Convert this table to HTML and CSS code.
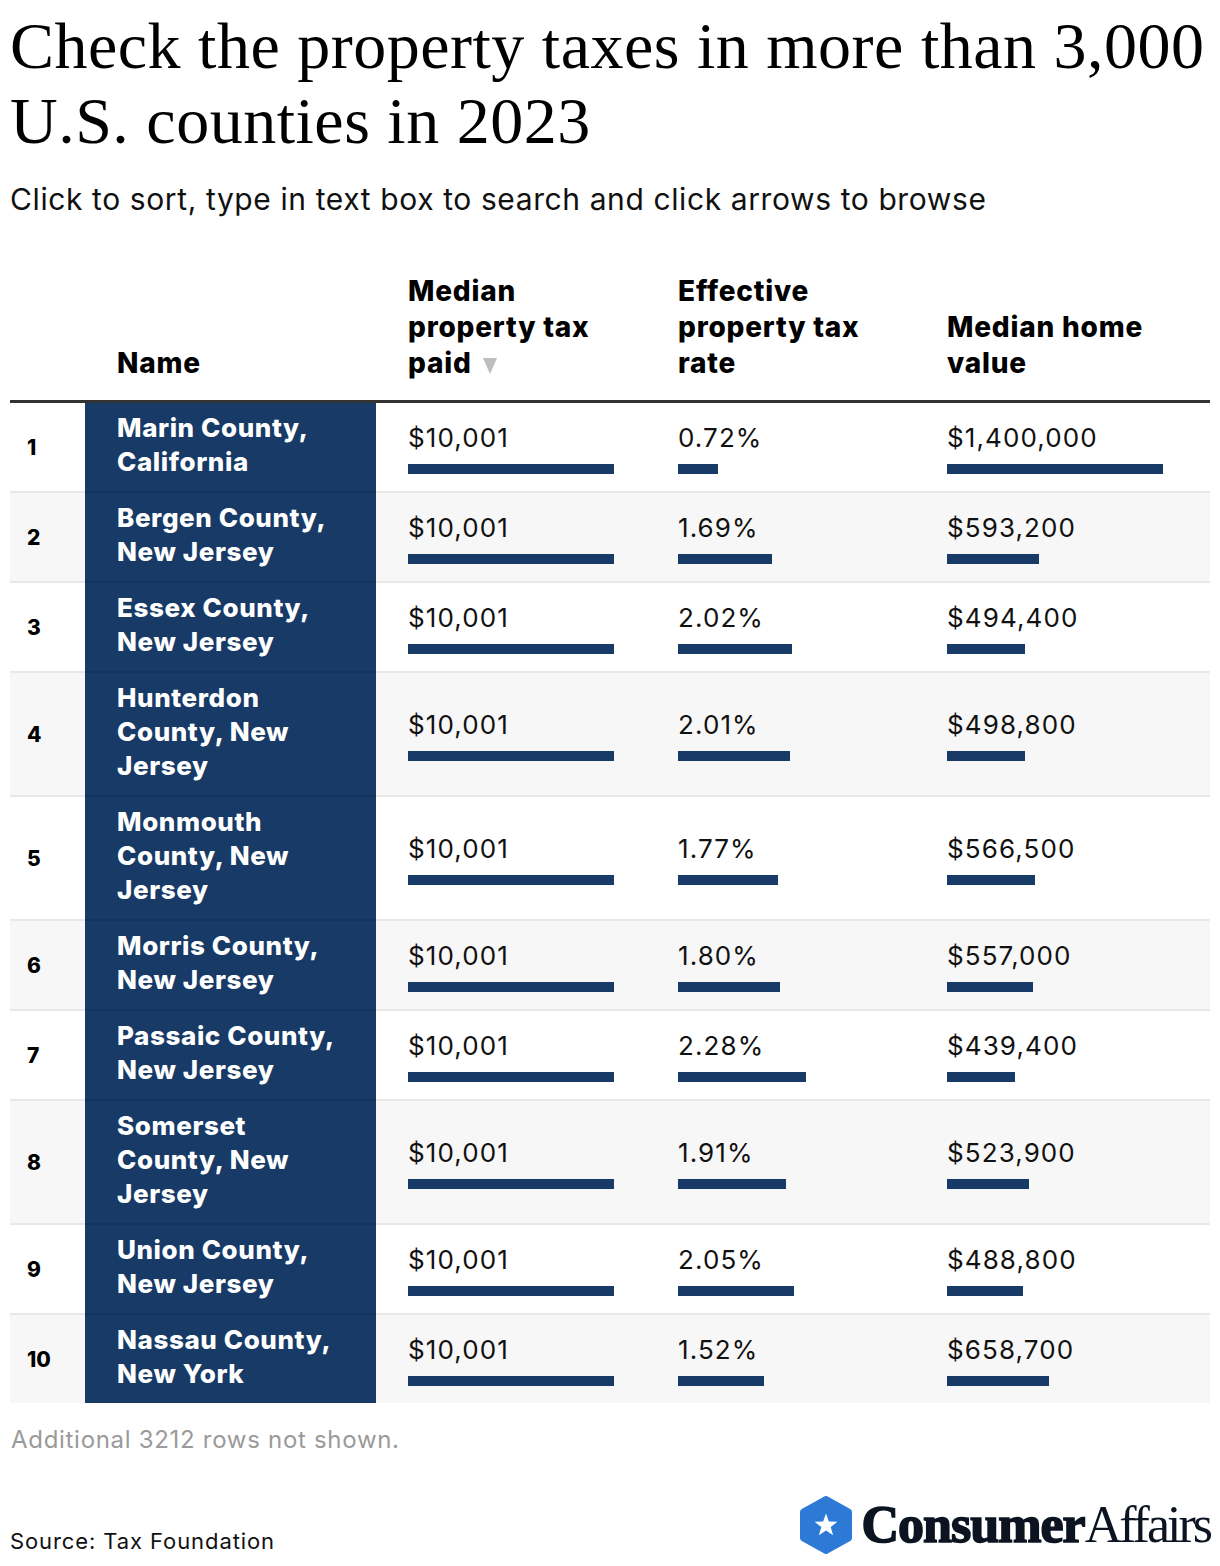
FILE: index.html
```html
<!DOCTYPE html>
<html lang="en">
<head>
<meta charset="utf-8">
<title>Property taxes by county</title>
<link rel="stylesheet" href="styles.css">
</head>
<body>
<div class="page">
  <h1 class="title">Check the property taxes in more than 3,000 U.S. counties in 2023</h1>
  <p class="subtitle">Click to sort, type in text box to search and click arrows to browse</p>

  <div class="table">
    <div class="thead">
      <div class="th th-rank"></div>
      <div class="th th-name">Name</div>
      <div class="th">Median property tax paid <svg class="sort" viewBox="0 0 14 16" width="14" height="16"><path d="M0 0 H14 L7 16 Z" fill="#bdbdbd"/></svg></div>
      <div class="th">Effective property tax rate</div>
      <div class="th">Median home value</div>
    </div>

    <div class="tr">
      <div class="td rank">1</div>
      <div class="td name">Marin County, California</div>
      <div class="td val"><span class="num">$10,001</span><span class="bar" style="width:206px"></span></div>
      <div class="td val"><span class="num">0.72%</span><span class="bar" style="width:40px"></span></div>
      <div class="td val"><span class="num">$1,400,000</span><span class="bar" style="width:216px"></span></div>
    </div>
    <div class="tr alt">
      <div class="td rank">2</div>
      <div class="td name">Bergen County, New Jersey</div>
      <div class="td val"><span class="num">$10,001</span><span class="bar" style="width:206px"></span></div>
      <div class="td val"><span class="num">1.69%</span><span class="bar" style="width:94px"></span></div>
      <div class="td val"><span class="num">$593,200</span><span class="bar" style="width:92px"></span></div>
    </div>
    <div class="tr">
      <div class="td rank">3</div>
      <div class="td name">Essex County, New Jersey</div>
      <div class="td val"><span class="num">$10,001</span><span class="bar" style="width:206px"></span></div>
      <div class="td val"><span class="num">2.02%</span><span class="bar" style="width:114px"></span></div>
      <div class="td val"><span class="num">$494,400</span><span class="bar" style="width:78px"></span></div>
    </div>
    <div class="tr alt">
      <div class="td rank">4</div>
      <div class="td name">Hunterdon County, New Jersey</div>
      <div class="td val"><span class="num">$10,001</span><span class="bar" style="width:206px"></span></div>
      <div class="td val"><span class="num">2.01%</span><span class="bar" style="width:112px"></span></div>
      <div class="td val"><span class="num">$498,800</span><span class="bar" style="width:78px"></span></div>
    </div>
    <div class="tr">
      <div class="td rank">5</div>
      <div class="td name">Monmouth County, New Jersey</div>
      <div class="td val"><span class="num">$10,001</span><span class="bar" style="width:206px"></span></div>
      <div class="td val"><span class="num">1.77%</span><span class="bar" style="width:100px"></span></div>
      <div class="td val"><span class="num">$566,500</span><span class="bar" style="width:88px"></span></div>
    </div>
    <div class="tr alt">
      <div class="td rank">6</div>
      <div class="td name">Morris County, New Jersey</div>
      <div class="td val"><span class="num">$10,001</span><span class="bar" style="width:206px"></span></div>
      <div class="td val"><span class="num">1.80%</span><span class="bar" style="width:102px"></span></div>
      <div class="td val"><span class="num">$557,000</span><span class="bar" style="width:86px"></span></div>
    </div>
    <div class="tr">
      <div class="td rank">7</div>
      <div class="td name">Passaic County, New Jersey</div>
      <div class="td val"><span class="num">$10,001</span><span class="bar" style="width:206px"></span></div>
      <div class="td val"><span class="num">2.28%</span><span class="bar" style="width:128px"></span></div>
      <div class="td val"><span class="num">$439,400</span><span class="bar" style="width:68px"></span></div>
    </div>
    <div class="tr alt">
      <div class="td rank">8</div>
      <div class="td name">Somerset County, New Jersey</div>
      <div class="td val"><span class="num">$10,001</span><span class="bar" style="width:206px"></span></div>
      <div class="td val"><span class="num">1.91%</span><span class="bar" style="width:108px"></span></div>
      <div class="td val"><span class="num">$523,900</span><span class="bar" style="width:82px"></span></div>
    </div>
    <div class="tr">
      <div class="td rank">9</div>
      <div class="td name">Union County, New Jersey</div>
      <div class="td val"><span class="num">$10,001</span><span class="bar" style="width:206px"></span></div>
      <div class="td val"><span class="num">2.05%</span><span class="bar" style="width:116px"></span></div>
      <div class="td val"><span class="num">$488,800</span><span class="bar" style="width:76px"></span></div>
    </div>
    <div class="tr alt last">
      <div class="td rank">10</div>
      <div class="td name">Nassau County, New York</div>
      <div class="td val"><span class="num">$10,001</span><span class="bar" style="width:206px"></span></div>
      <div class="td val"><span class="num">1.52%</span><span class="bar" style="width:86px"></span></div>
      <div class="td val"><span class="num">$658,700</span><span class="bar" style="width:102px"></span></div>
    </div>
  </div>

  <p class="more">Additional 3212 rows not shown.</p>

  <div class="footer">
    <p class="source">Source: Tax Foundation</p>
    <div class="logo">
      <svg class="hex" viewBox="0 0 52 58" width="52" height="58">
        <polygon points="26,3.5 48.5,16 48.5,42 26,54.5 3.5,42 3.5,16" fill="#2d7ad6" stroke="#2d7ad6" stroke-width="7" stroke-linejoin="round"/>
        <polygon points="26,17.5 28.9,25.6 37.4,25.8 30.7,31 33.1,39.2 26,34.4 18.9,39.2 21.3,31 14.6,25.8 23.1,25.6" fill="#fff"/>
      </svg>
      <span class="brand"><span class="b1">Consumer</span><span class="b2">Affairs</span></span>
    </div>
  </div>
</div>
</body>
</html>
```

FILE: styles.css
```css
* { box-sizing: border-box; }
html, body { margin: 0; padding: 0; background: #fff; }
.page {
  width: 1220px;
  padding: 8px 10px 0 10px;
  font-family: "Inter", "Roboto", sans-serif;
  color: #111;
}
.title {
  margin: 0;
  font-family: "Liberation Serif", serif;
  font-weight: 400;
  font-size: 66px;
  line-height: 75px;
  letter-spacing: 0.5px;
  color: #000;
}
.subtitle {
  margin: 21px 0 0 0;
  font-size: 30px;
  line-height: 40px;
  font-weight: 400;
  letter-spacing: 0.6px;
  color: #111;
}
.table { margin-top: 54px; }
.thead, .tr {
  display: grid;
  grid-template-columns: 75px 291px 270px 269px 295px;
}
.thead {
  align-items: end;
  border-bottom: 3px solid #333;
  padding-bottom: 19px;
}
.th {
  font-weight: 800;
  font-size: 28px;
  line-height: 36px;
  letter-spacing: 0.8px;
  color: #000;
  padding-left: 32px;
  padding-right: 20px;
}
.th-rank { padding: 0; }
.sort { vertical-align: -1px; margin-left: 4px; }
.tr { background: #fff; }
.tr.alt { background: #f7f7f7; }
.td {
  border-bottom: 2px solid #e8e8e8;
}
.tr.last .td { border-bottom: none; }
.rank {
  display: flex;
  align-items: center;
  padding-left: 17px;
  font-weight: 800;
  font-size: 21px;
  color: #000;
}
.name {
  background: #173a66;
  border-bottom-color: #14345c;
  color: #fff;
  font-weight: 800;
  font-size: 26px;
  line-height: 34px;
  letter-spacing: 0.6px;
  padding: 8px 30px 12px 32px;
}
.val {
  display: flex;
  flex-direction: column;
  justify-content: center;
  align-items: flex-start;
  padding-left: 32px;
}
.num {
  font-size: 26px;
  line-height: 34px;
  font-weight: 400;
  letter-spacing: 1.1px;
  color: #111;
}
.bar {
  display: block;
  height: 10px;
  margin-top: 9px;
  background: #173a66;
}
.more {
  margin: 22px 0 0 1px;
  font-size: 24px;
  line-height: 30px;
  letter-spacing: 0.7px;
  color: #9a9a9a;
}
.footer {
  margin-top: 40px;
  display: flex;
  justify-content: space-between;
  align-items: flex-end;
}
.source {
  margin: 0;
  font-size: 22px;
  line-height: 28px;
  letter-spacing: 0.9px;
  color: #111;
  padding-bottom: 0;
}
.logo {
  display: flex;
  align-items: center;
  gap: 10px;
}
.hex { display: block; }
.brand {
  font-family: "Liberation Serif", serif;
  font-size: 52px;
  line-height: 60px;
  color: #0b1420;
  white-space: nowrap;
}
.b1 {
  font-weight: 700;
  letter-spacing: -1px;
  -webkit-text-stroke: 1.6px #0b1420;
}
.b2 {
  font-weight: 400;
  letter-spacing: -3px;
}
```
